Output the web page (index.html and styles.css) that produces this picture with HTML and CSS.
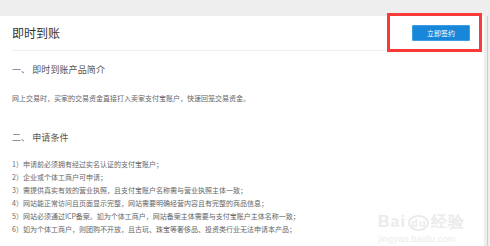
FILE: index.html
```html
<!DOCTYPE html>
<html lang="zh">
<head>
<meta charset="utf-8">
<link rel="stylesheet" href="styles.css">
</head>
<body>
<div class="frame">
  <div class="card">
    <div class="head">
      <h1 class="title">即时到账</h1>
      <div class="btn-wrap">
        <button class="btn">立即签约</button>
        <span class="mark"></span>
      </div>
    </div>
    <h2 class="sec sec-first"><span class="num">一、</span>即时到账产品简介</h2>
    <p class="para">网上交易时，买家的交易资金直接打入卖家支付宝账户，快速回笼交易资金。</p>
    <h2 class="sec sec-second"><span class="num">二、</span>申请条件</h2>
    <ul class="list">
      <li>1）申请前必须拥有经过实名认证的支付宝账户；</li>
      <li>2）企业或个体工商户可申请；</li>
      <li>3）需提供真实有效的营业执照，且支付宝账户名称需与营业执照主体一致；</li>
      <li>4）网站能正常访问且页面显示完整，网站需要明确经营内容且有完整的商品信息；</li>
      <li>5）网站必须通过ICP备案。如为个体工商户，网站备案主体需要与支付宝账户主体名称一致；</li>
      <li>6）如为个体工商户，则团购不开放，且古玩、珠宝等奢侈品、投资类行业无法申请本产品；</li>
    </ul>
    <div class="wm">
      <div class="wm-top">Bai<span class="wm-du">du</span>经验</div>
      <div class="wm-url">jingyan.baidu.com</div>
    </div>
  </div>
  <div class="side"><span class="rail"></span></div>
</div>
</body>
</html>
```
FILE: styles.css
```css
html, body {
  margin: 0;
  padding: 0;
}
body {
  background: #eeeeee;
  font-family: "Noto Sans CJK SC", "Noto Sans", sans-serif;
  width: 490px;
  height: 246px;
  overflow: hidden;
}
.frame {
  display: flex;
  padding-top: 16px;
  height: 230px;
}
.card {
  position: relative;
  width: 484px;
  background: #ffffff;
}
.side {
  width: 6px;
  display: flex;
  justify-content: flex-end;
  padding-right: 2px;
  box-sizing: border-box;
}
.rail {
  width: 1px;
  background: #b9dcb5;
}
.head {
  display: flex;
  align-items: center;
  justify-content: space-between;
  height: 34px;
  margin-left: 12px;
  padding-right: 14px;
  border-bottom: 1px solid #eeeeee;
}
.title {
  margin: 0;
  font-size: 12px;
  font-weight: normal;
  color: #333333;
  line-height: 16px;
}
.btn-wrap {
  position: relative;
  display: flex;
}
.btn {
  width: 58px;
  height: 16px;
  padding: 0;
  border: 1px solid #3d9ee6;
  border-radius: 1px;
  background: #1886d9;
  color: #ffffff;
  font-family: inherit;
  font-size: 7px;
  line-height: 14px;
}
.mark {
  position: absolute;
  left: -25px;
  top: -12px;
  width: 95px;
  height: 39px;
  border: 3px solid #f93a3a;
  box-sizing: border-box;
}
.sec {
  margin: 0 0 0 12px;
  font-size: 9px;
  font-weight: normal;
  line-height: 16px;
  color: #555555;
  letter-spacing: 0.1px;
}
.num {
  color: #777777;
  margin-right: 2px;
}
.sec-first {
  margin-top: 11px;
}
.sec-second {
  margin-top: 26px;
}
.para {
  margin: 14px 0 0 12px;
  font-size: 7px;
  line-height: 12px;
  color: #666666;
}
.list {
  list-style: none;
  margin: 12px 0 0 12px;
  padding: 0;
  font-size: 7px;
  line-height: 13px;
  color: #666666;
}
.wm {
  position: absolute;
  left: 378px;
  top: 198px;
  color: #ebebeb;
  font-family: "Liberation Sans", sans-serif;
  line-height: 1;
}
.wm-top {
  font-size: 16px;
  font-weight: bold;
  letter-spacing: 1px;
}
.wm-du {
  font-size: 11px;
  border: 2px solid #ebebeb;
  border-radius: 50%;
  padding: 0 1px;
  margin: 0 2px;
}
.wm-url {
  margin-top: 5px;
  font-size: 9px;
  letter-spacing: 0.3px;
}
```
